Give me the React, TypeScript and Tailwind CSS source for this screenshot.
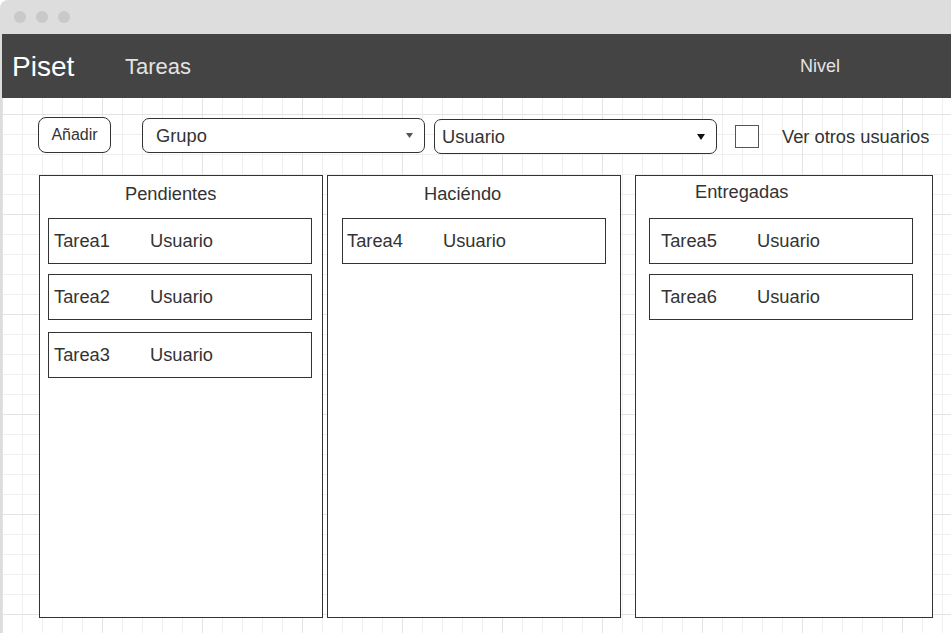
import React from 'react';

interface Task {
  name: string;
  user: string;
}

interface ColumnProps {
  title: string;
  tasks: Task[];
  className: string;
  headClass: string;
  listClass: string;
  gapClasses: string[];
  cardPad: string;
}

const Caret: React.FC<{ color: string; w: number; h: number }> = ({ color, w, h }) => (
  <svg width={w} height={h} viewBox={`0 0 ${w} ${h}`} className="shrink-0">
    <polygon points={`0,0 ${w},0 ${w / 2},${h}`} fill={color} />
  </svg>
);

const Column: React.FC<ColumnProps> = ({ title, tasks, className, headClass, listClass, gapClasses, cardPad }) => (
  <div className={`flex flex-col h-[443px] border border-[#333] bg-white ${className}`}>
    <p className={`text-[18.3px] leading-[22px] text-[#333] ${headClass}`}>{title}</p>
    <div className={`flex flex-col ${listClass}`}>
      {tasks.map((t, i) => (
        <div
          key={t.name}
          className={`flex items-center w-[264px] h-[46px] border border-[#333] bg-white text-[18.3px] leading-[22px] text-[#333] ${cardPad} ${gapClasses[i] ?? ''}`}
        >
          <span className="w-[96px]">{t.name}</span>
          <span>{t.user}</span>
        </div>
      ))}
    </div>
  </div>
);

export default function App() {
  return (
    <div className="w-[951px] h-[633px] overflow-hidden bg-white font-['Liberation_Sans',Arial,sans-serif]">
      <div className="flex flex-col h-full bg-[#dddddd] rounded-tl-[8px]">
        {/* title bar */}
        <div className="flex items-center h-[34px] shrink-0 pl-[14px] gap-[10px]">
          <span className="w-[12px] h-[12px] rounded-full bg-[#c9c9c9]" />
          <span className="w-[12px] h-[12px] rounded-full bg-[#c9c9c9]" />
          <span className="w-[12px] h-[12px] rounded-full bg-[#c9c9c9]" />
        </div>

        <div className="flex flex-col flex-1 ml-[2px] bg-white">
          {/* header */}
          <div className="flex items-center h-[64px] shrink-0 bg-[#444444] pl-[10px] pr-[111px]">
            <span className="w-[113px] text-[28px] leading-[32px] text-white mt-[2px]">Piset</span>
            <span className="text-[22px] leading-[26px] text-[#e3e3e3] mt-[2px]">Tareas</span>
            <span className="ml-auto text-[18px] leading-[22px] text-[#e3e3e3]">Nivel</span>
          </div>

          {/* board */}
          <div className="flex flex-col flex-1 bg-[linear-gradient(to_right,#e3e3e3_1px,transparent_1px),linear-gradient(to_bottom,#e3e3e3_1px,transparent_1px),linear-gradient(to_right,#efefef_1px,transparent_1px),linear-gradient(to_bottom,#efefef_1px,transparent_1px)] bg-[size:100px_100px,100px_100px,20px_20px,20px_20px] bg-[position:0_16px]">
            {/* toolbar */}
            <div className="flex items-start pt-[19px] pl-[36px] text-[#333]">
              <button className="flex items-center justify-center w-[73px] h-[36px] rounded-[8px] border border-[#333] bg-white text-[16px]">
                Añadir
              </button>
              <div className="flex items-center justify-between ml-[31px] mt-[1px] w-[283px] h-[35px] rounded-[7px] border border-[#333] bg-white pl-[13px] pr-[11px] text-[18.3px]">
                <span>Grupo</span>
                <Caret color="#555555" w={7} h={5} />
              </div>
              <div className="flex items-center justify-between ml-[9px] mt-[2px] w-[283px] h-[35px] rounded-[7px] border border-[#333] bg-white pl-[7px] pr-[11px] text-[18.3px]">
                <span>Usuario</span>
                <Caret color="#111111" w={8} h={6} />
              </div>
              <span className="ml-[18px] mt-[8px] w-[24px] h-[23px] border border-[#555] bg-white" />
              <span className="ml-[23px] mt-[9px] text-[18.3px] leading-[22px]">Ver otros usuarios</span>
            </div>

            {/* columns */}
            <div className="flex items-start mt-[21px] pl-[37px]">
              <Column
                title="Pendientes"
                className="w-[284px]"
                headClass="pt-[7px] pl-[85px]"
                listClass="mt-[13px] ml-[8px]"
                gapClasses={['', 'mt-[10px]', 'mt-[12px]']}
                cardPad="pl-[5px]"
                tasks={[
                  { name: 'Tarea1', user: 'Usuario' },
                  { name: 'Tarea2', user: 'Usuario' },
                  { name: 'Tarea3', user: 'Usuario' },
                ]}
              />
              <Column
                title="Haciéndo"
                className="w-[294px] ml-[4px]"
                headClass="pt-[7px] pl-[96px]"
                listClass="mt-[13px] ml-[14px]"
                gapClasses={['']}
                cardPad="pl-[4px]"
                tasks={[{ name: 'Tarea4', user: 'Usuario' }]}
              />
              <Column
                title="Entregadas"
                className="w-[298px] ml-[14px]"
                headClass="pt-[5px] pl-[59px]"
                listClass="mt-[15px] ml-[13px]"
                gapClasses={['', 'mt-[10px]']}
                cardPad="pl-[11px]"
                tasks={[
                  { name: 'Tarea5', user: 'Usuario' },
                  { name: 'Tarea6', user: 'Usuario' },
                ]}
              />
            </div>
          </div>
        </div>
      </div>
    </div>
  );
}
